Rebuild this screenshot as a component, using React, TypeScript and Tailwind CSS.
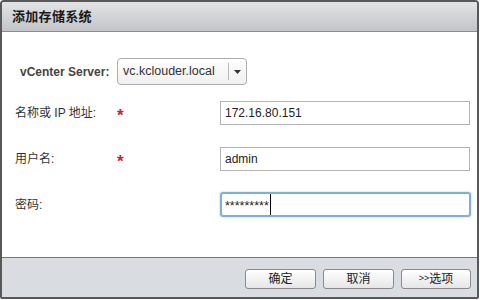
import React from "react";

const font = { fontFamily: '"Liberation Sans", Arial, "Noto Sans CJK SC", sans-serif' };

function Star() {
  return (
    <span className="text-[#c3262d] text-[17px] font-bold leading-none mt-[4px]">*</span>
  );
}

export default function App() {
  return (
    <div className="w-[480px] h-[300px] bg-white" style={font}>
      <div className="w-[479px] h-[299px] border-2 border-[#585858] rounded-t-[4px] rounded-b-[2px] flex flex-col overflow-hidden">
        <div className="h-[30px] shrink-0 border-b border-[#8c8c8c] bg-gradient-to-b from-[#e3e4e6] to-[#c3c4c7] flex items-center pl-[10px]">
          <span className="text-[13px] font-bold text-[#1a1a1a] tracking-[0.3px]">添加存储系统</span>
        </div>
        <div className="h-[225px] shrink-0 bg-white flex flex-col text-[12px] text-[#333]">
          <div className="flex items-center h-[27px] mt-[26px] pl-[18px]">
            <span className="w-[97px] font-bold text-[#444]">vCenter Server:</span>
            <div className="w-[130px] h-[27px] rounded-[4px] border border-[#acacac] bg-gradient-to-b from-white to-[#f0f0f0] flex items-center">
              <span className="flex-1 pl-[5px] text-[#333] text-[12.5px]">vc.kclouder.local</span>
              <div className="w-px h-[17px] bg-[#b8b8b8]"></div>
              <div className="w-[17px] flex justify-center">
                <svg width="7" height="4" viewBox="0 0 7 4">
                  <path d="M0 0 H7 L3.5 4 Z" fill="#333" />
                </svg>
              </div>
            </div>
          </div>
          <div className="flex items-center h-[24px] mt-[16px] pl-[13px]">
            <span className="w-[102px]">名称或 IP 地址:</span>
            <div className="w-[103px] flex"><Star /></div>
            <div className="w-[250px] h-[24px] border border-[#b3b3b3] flex items-center pl-[4px] text-[#222]">172.16.80.151</div>
          </div>
          <div className="flex items-center h-[24px] mt-[22px] pl-[13px]">
            <span className="w-[102px]">用户名:</span>
            <div className="w-[103px] flex"><Star /></div>
            <div className="w-[250px] h-[24px] border border-[#b3b3b3] flex items-center pl-[4px] text-[#222]">admin</div>
          </div>
          <div className="flex items-center h-[25px] mt-[21px] pl-[13px]">
            <span className="w-[205px]">密码:</span>
            <div className="w-[251px] h-[25px] border-2 border-[#7eb0cf] rounded-[3px] flex items-stretch pl-[3px] text-[#222] shadow-[0_0_2px_#9cc3dc]">
              <span className="text-[12.5px] leading-[24px]">*********</span>
              <span className="w-px bg-black ml-[1px]"></span>
            </div>
          </div>
        </div>
        <div className="flex-1 border-t border-[#777] bg-[#d9dde2] flex items-start justify-end gap-[7px] pt-[11px] pr-[6px]">
          <button className="w-[71px] h-[20px] rounded-[3px] border border-[#8a8a8a] bg-gradient-to-b from-white to-[#e6e6e6] text-[12px] text-[#222] flex items-center justify-center">确定</button>
          <button className="w-[71px] h-[20px] rounded-[3px] border border-[#8a8a8a] bg-gradient-to-b from-white to-[#e6e6e6] text-[12px] text-[#222] flex items-center justify-center">取消</button>
          <button className="w-[70px] h-[20px] rounded-[3px] border border-[#8a8a8a] bg-gradient-to-b from-white to-[#e6e6e6] text-[12px] text-[#222] flex items-center justify-center"><span className="text-[9px]">&gt;&gt;</span>选项</button>
        </div>
      </div>
    </div>
  );
}
